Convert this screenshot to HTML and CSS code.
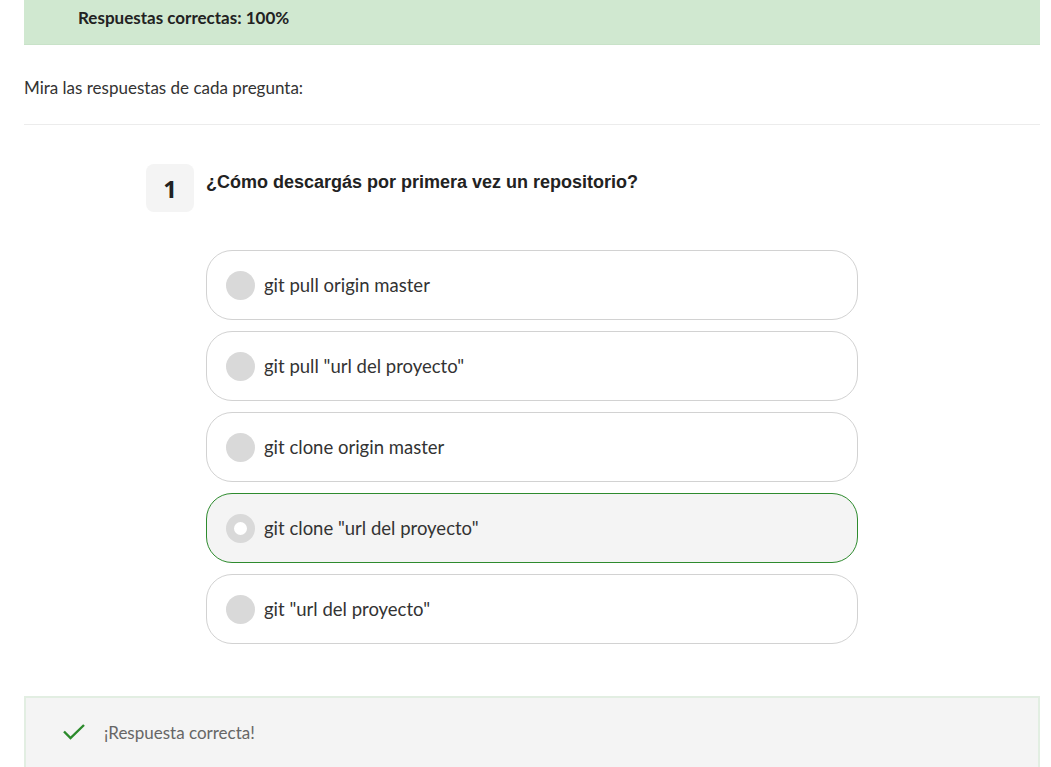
FILE: index.html
```html
<!DOCTYPE html>
<html lang="es">
<head>
<meta charset="utf-8">
<title>Resultados</title>
<link rel="stylesheet" href="styles.css">
</head>
<body>
<div class="page">
  <div class="score">Respuestas correctas: 100%</div>
  <p class="intro">Mira las respuestas de cada pregunta:</p>
  <hr class="divider">
  <div class="question">
    <div class="q-head">
      <div class="q-num">1</div>
      <div class="q-text">¿Cómo descargás por primera vez un repositorio?</div>
    </div>
    <ul class="options">
      <li class="option"><span class="radio"></span><span class="opt-text">git pull origin master</span></li>
      <li class="option"><span class="radio"></span><span class="opt-text">git pull "url del proyecto"</span></li>
      <li class="option"><span class="radio"></span><span class="opt-text">git clone origin master</span></li>
      <li class="option selected"><span class="radio"></span><span class="opt-text">git clone "url del proyecto"</span></li>
      <li class="option"><span class="radio"></span><span class="opt-text">git "url del proyecto"</span></li>
    </ul>
  </div>
  <div class="feedback">
    <svg class="check" width="24" height="20" viewBox="0 0 24 20"><path d="M2 9.5 L8.5 16 L22 3" fill="none" stroke="#2b8a2b" stroke-width="2.4"/></svg>
    <span class="fb-text">¡Respuesta correcta!</span>
  </div>
</div>
</body>
</html>
```
FILE: styles.css
```css
html, body {
  margin: 0;
  padding: 0;
  background: #fff;
}
body {
  font-family: "Lato", "Open Sans", sans-serif;
  color: #333;
  overflow: hidden;
}
.page {
  margin: 0 11px 0 24px;
  height: 767px;
}
.score {
  background: #d0e8d0;
  height: 45px;
  box-sizing: border-box;
  padding: 7px 0 0 54px;
  font-weight: 700;
  font-size: 17px;
  color: #222;
  border-bottom: 1px solid #c8e2c8;
}
.intro {
  margin: 0;
  padding-top: 32px;
  height: 47px;
  font-size: 17px;
  line-height: 22px;
  color: #333;
}
.divider {
  border: 0;
  border-top: 1px solid #ececec;
  margin: 0;
}
.question {
  padding: 39px 0 0 122px;
}
.q-head {
  display: flex;
  gap: 12px;
  align-items: flex-start;
}
.q-num {
  width: 48px;
  height: 48px;
  border-radius: 8px;
  background: #f4f4f4;
  display: flex;
  align-items: center;
  justify-content: center;
  font-family: "Open Sans", sans-serif;
  font-weight: 700;
  font-size: 24px;
  color: #222;
}
.q-text {
  font-family: "Liberation Sans", Arial, sans-serif;
  font-weight: 700;
  font-size: 18px;
  color: #222;
  padding-top: 8px;
}
.options {
  list-style: none;
  margin: 38px 0 0 60px;
  padding: 0;
  width: 652px;
  display: flex;
  flex-direction: column;
  gap: 11px;
}
.option {
  height: 70px;
  box-sizing: border-box;
  border: 1px solid #d2d2d2;
  border-radius: 26px;
  display: flex;
  align-items: center;
  padding-left: 19px;
  gap: 9px;
}
.option.selected {
  border-color: #2e8b2e;
  background: #f4f4f4;
}
.radio {
  width: 29px;
  height: 29px;
  border-radius: 50%;
  background: #d9d9d9;
  box-sizing: border-box;
  flex: none;
}
.selected .radio {
  background: #fff;
  border: 8px solid #d9d9d9;
}
.opt-text {
  font-size: 18.5px;
  color: #333;
}
.feedback {
  margin-top: 52px;
  height: 80px;
  box-sizing: border-box;
  border: 2px solid #e2eee2;
  border-bottom: 0;
  background: #f4f4f4;
  display: flex;
  align-items: flex-start;
  padding: 23px 0 0 36px;
  gap: 18px;
}
.check {
  flex: none;
  margin-top: 1px;
}
.fb-text {
  font-size: 17px;
  color: #666;
  line-height: 24px;
}
```
